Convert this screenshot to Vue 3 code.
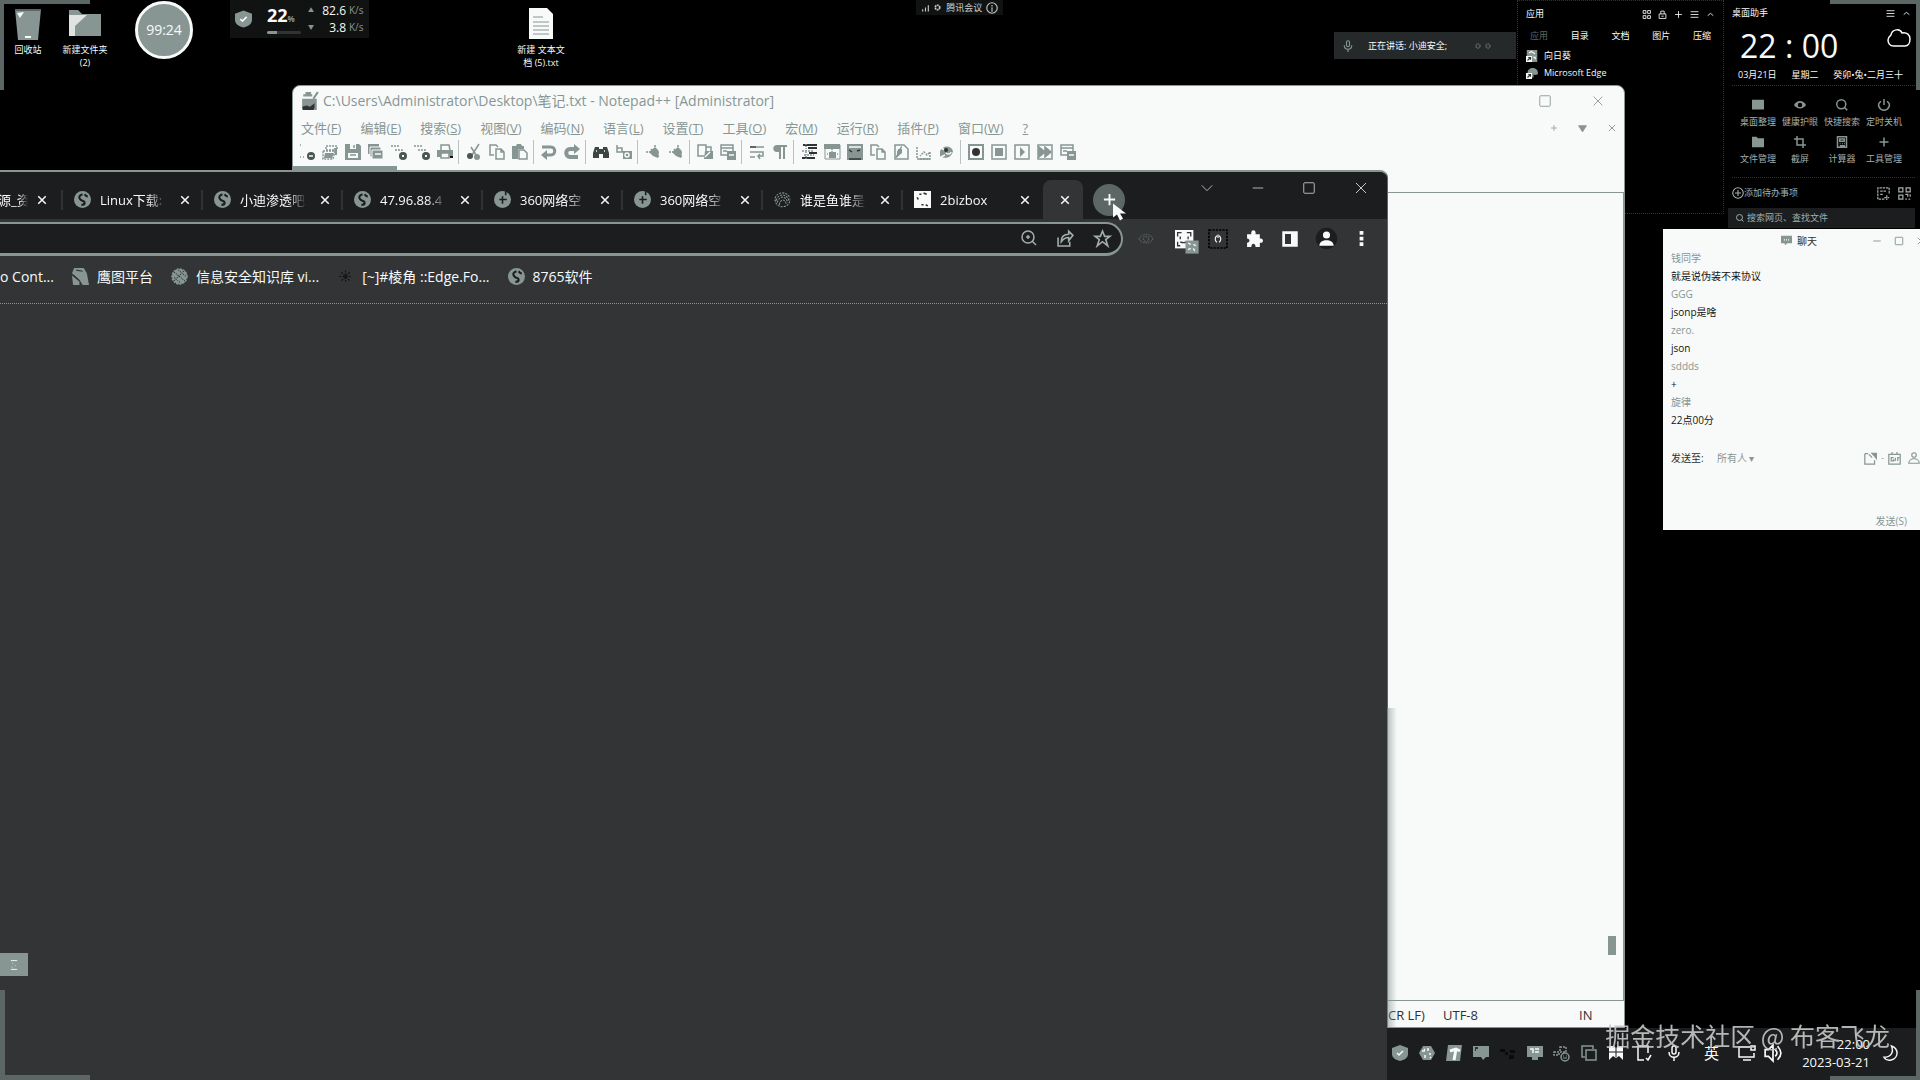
<script setup>
import { h } from 'vue'

const icons = {
  close: '<path d="M3 3l10 10M13 3L3 13"/>',
  minus: '<path d="M2 8h12"/>',
  plus: '<path d="M8 2v12M2 8h12"/>',
  square: '<rect x="2" y="2" width="12" height="12" rx="1"/>',
  down: '<path d="M2 5l6 6 6-6"/>',
  up: '<path d="M3 10l5-4 5 4"/>',
  menu: '<path d="M1 3h14M1 8h14M1 13h14"/>',
  handle: '<path d="M3 1h10M3 15h10M6 5v1M10 8v1M5 11v1"/>',
  tri: '<path d="M1 3h14L8 14z" fill="currentColor"/>',
  globe: '<circle cx="8" cy="8" r="8" fill="currentColor" stroke="none"/><path d="M8 3C5 4 4 6 6 8s4 1 4 3-2 2-3 2M10 3c1 1 1 2 3 2" stroke="#1b1d1e" stroke-width="2"/>',
  compass: '<circle cx="8" cy="8" r="8" fill="currentColor" stroke="none"/><path d="M8 5v7M5 8h7" stroke="#1b1d1e"/><path d="M11 0v4" stroke="#1b1d1e"/>',
  edge: '<path d="M2 8c0-9 14-9 14 0 0 3-4 3-6 2v4H3z" fill="currentColor" stroke="none"/><path d="M0 8h8v8H0z" fill="#f8fafa" stroke="none"/><path d="M2 14l4-4M3 10h3v3" stroke="#303234"/>',
  sunflower: '<path d="M1 0h14v16H1z" fill="currentColor" stroke="none"/><path d="M0 8h8v8H0zM9 9h4v4z" fill="#f8fafa" stroke="none"/><path d="M4 4l3-2 5 3" stroke="#f8fafa"/><path d="M2 14l4-4M3 10h3v3" stroke="#303234"/>',
  print: '<path d="M1 7c2-7 12-7 14 0M2 9c2-7 10-7 12 0M3 11c2-7 8-7 10 0M5 13c1-6 5-6 7 0M1 8c0 9 14 9 14 0" stroke-width="1" stroke-dasharray="2 1"/>',
  bizbox: '<path d="M0 0h16v16H0z" fill="#f8fafa" stroke="none"/><path d="M3 6l1 2M5 3h2M9 2l3 1M7 13h2M11 13l2 1" stroke="#303234"/>',
  zoom: '<circle cx="7" cy="7" r="6"/><path d="M11 11l4 4M7 5v4M5 7h4"/>',
  share: '<path d="M1 7v8h11v-4M4 11c0-5 3-7 7-7V1l4 4-4 5V7c-3 0-5 1-7 4z"/>',
  star: '<path d="M8 1l2 5h5l-4 3 2 6-5-4-5 4 2-6-4-3h5z"/>',
  eye: '<path d="M0 8c4-7 12-7 16 0-4 6-12 6-16 0z" stroke-dasharray="1 1"/><circle cx="8" cy="8" r="3" stroke-dasharray="1 1"/>',
  face: '<path d="M0 0h14v14H0z" fill="#f8fafa" stroke="none"/><path d="M2 5V2h3M9 2h3v3M2 9v3h2M4 5v2M10 5v2M4 9c2 1 3 1 5 0" stroke="#303234" stroke-width="1"/><path d="M8 8h10v10H8z" fill="#879693" stroke="none"/><path d="M10 10l2 1M14 11l2 1M10 15l2-1M14 14l1 2" stroke="#f8fafa" stroke-width="1"/>',
  scope: '<path d="M0 0h16v16H0z" stroke="#000" stroke-dasharray="2 1"/><path d="M7 5c-2 2-2 4 0 6M9 5c2 2 2 4 0 6M8 4v3" stroke-width="1"/>',
  puzzle: '<path d="M1 4h4c-1-5 5-5 4 0h4v4c4-1 4 5 0 4v4H9c0-4-4-4-4 0H1v-4c3 0 3-4 0-4z" fill="currentColor" stroke="none"/>',
  panel: '<rect x="1" y="1" width="14" height="14" fill="currentColor"/><path d="M3 3h6v10H3z" fill="#303234" stroke="none"/>',
  person: '<circle cx="8" cy="8" r="9" fill="#1b1d1e" stroke="none"/><circle cx="8" cy="5" r="3" fill="currentColor" stroke="none"/><path d="M2 14c0-6 12-6 12 0z" fill="currentColor" stroke="none"/>',
  dots: '<path d="M6 0h4v4H6zM6 6h4v4H6zM6 12h4v4H6z" fill="currentColor" stroke="none"/>',
  eagle: '<path d="M2 0h9l3 5 2 11H10L7 11 0 5z" fill="currentColor" stroke="none"/><path d="M0 7l7 6v3H1z" fill="currentColor" stroke="none"/><path d="M4 2l6 1M1 7l4 3" stroke="#303234" stroke-width="1"/>',
  knot: '<circle cx="8" cy="8" r="7" fill="currentColor" stroke-dasharray="2 1"/><path d="M3 4l10 8M3 9l6 5M7 2l7 6M12 3l-9 9" stroke="#303234" stroke-width="1" stroke-dasharray="1 1"/>',
  spark: '<path d="M8 2v12M2 8h12M4 4l8 8M12 4l-8 8" stroke="#121414" stroke-width="1" stroke-dasharray="2 1"/>',
  newdoc: '<path d="M1 1h1M1 13h5" stroke-dasharray="1 2"/><circle cx="12" cy="12" r="4" fill="#4b5553" stroke="none"/><path d="M10 12h4" stroke="#f8fafa"/>',
  open: '<path d="M4 2h11v4H4zM1 7h12l-2 8H1z" stroke-dasharray="2 1"/><path d="M3 9h9l-2 5H2zM12 4h3v7h-2z" fill="currentColor" stroke="none"/>',
  save: '<path d="M0 0h14l2 2v14H0z" fill="currentColor" stroke="none"/><path d="M5 0h6v5H5zM3 9h10v5H3z" fill="#f8fafa" stroke="none"/><path d="M5 11h6M9 1v3"/>',
  saveall: '<path d="M0 0h11v10H0z" fill="currentColor" stroke="none"/><path d="M2 3h11v10H2z" fill="currentColor" stroke="#f8fafa" stroke-width="1"/><path d="M4 6h11v9H4z" fill="currentColor" stroke="#f8fafa" stroke-width="1"/><path d="M7 10h6" stroke="#f8fafa"/>',
  shut: '<path d="M0 2h8M4 6h7v4" stroke-dasharray="2 1"/><circle cx="12" cy="12" r="4" fill="#4b5553" stroke="none"/><path d="M11 11l2 2M13 11l-2 2" stroke="#f8fafa" stroke-width="1"/>',
  printer: '<path d="M4 6V1h8l1 5" /><path d="M0 6h16v7H0z" fill="currentColor" stroke="none"/><path d="M4 9h8v5H4z" fill="#f8fafa"/><path d="M13 13h3" stroke="#121414" stroke-width="2"/>',
  cut: '<path d="M13 0L6 11M5 3l5 8"/><circle cx="4" cy="12" r="3" fill="#4b5553" stroke="none"/><circle cx="11" cy="13" r="3" fill="currentColor" stroke="none"/>',
  copy: '<path d="M5 11H1V1h6l2 2M7 5h5l3 3v7H7zM12 5v3h3"/>',
  paste: '<path d="M0 2h4l1-2h4l1 2h2v3H6v10H0z" fill="currentColor" stroke="none"/><path d="M7 6h5l3 3v6H7z" fill="#f8fafa"/>',
  undo: '<path d="M1 3h9c5 0 5 8 0 8H5" stroke-width="3"/><path d="M0 11l6-5v10z" fill="currentColor" stroke="none"/>',
  redo: '<path d="M12 5H6c-5 0-5 8 0 8h8" stroke-width="4"/><path d="M16 5l-6-5v10z" fill="currentColor" stroke="none"/>',
  find: '<path d="M2 3h4v2h4V3h4l2 6v5h-6v-4H6v4H0V9z" fill="#3c4543" stroke="none"/><path d="M3 7h2M11 7h2" stroke="#f8fafa" stroke-dasharray="1 1"/>',
  swap: '<path d="M1 1v7h5V4H1M6 7l4 4"/><path d="M7 7h9v8H7z" fill="currentColor" stroke="none"/><circle cx="11" cy="11" r="2" stroke="#f8fafa"/>',
  zin: '<path d="M1 8h7M10 1v5M6 5l8 8" stroke-dasharray="2 1"/><path d="M4 8l6-5 3 3 1 2-1 6-5-2z" fill="currentColor" stroke="none"/>',
  pages: '<path d="M1 1h8v11H1zM9 3h5v4"/><path d="M8 7h8v8H7z" fill="currentColor" stroke="none"/><path d="M8 13l5-5" stroke="#f8fafa"/>',
  wrap: '<path d="M1 3h6" stroke="#303234"/><path d="M7 3h8M1 8h13v4h-5M1 13h5M11 10l-2 2 2 3"/>',
  pilcrow: '<path d="M8 1v14M12 1v14M6 2h9" stroke-width="2"/><path d="M8 1H5c-5 0-5 7 0 7h3z" fill="currentColor" stroke="none"/>',
  indent: '<path d="M2 1h14M7 4h9M8 9h8M1 14h13" stroke="#303234" stroke-width="2"/><path d="M1 7h12M3 11h10" stroke-dasharray="2 1"/><path d="M5 0v16" stroke-dasharray="1 1"/>',
  win: '<path d="M1 1h15v14H1z" stroke-width="1"/><path d="M0 0h16v5H0zM5 8h7v6H5z" fill="currentColor" stroke="none"/><path d="M8 5v10M3 10h11" stroke-dasharray="1 1"/>',
  map: '<path d="M0 0h16v16H0z" fill="currentColor" stroke="none"/><path d="M2 3h12" stroke="#f8fafa"/><path d="M2 6l3 2M10 7l3-1M2 15h12" stroke="#303234"/>',
  func: '<path d="M2 1h9l4 4v10H2zM9 3c-3 0-2 9-6 10M4 8h5" /><path d="M5 5h4v4l-6 5z" fill="currentColor" stroke="none"/>',
  folder2: '<path d="M1 3v12h13V8l-3 3-3-3-4 4" stroke-dasharray="2 1"/><path d="M3 15h11" />',
  monitor: '<path d="M1 7c3-6 11-6 13 0-2 8-9 8-13 5z" fill="currentColor" stroke="none"/><path d="M0 3l6 3M2 13l4-2M7 9c2 2 5 1 5-1" stroke="#f8fafa"/><circle cx="7" cy="6" r="2" fill="#303234" stroke="none"/>',
  rec: '<rect x="1" y="1" width="14" height="14" stroke-width="2"/><circle cx="8" cy="8" r="4" fill="#303234" stroke="none"/>',
  stop: '<rect x="1" y="1" width="14" height="14"/><path d="M4 4h8v8H4z" fill="currentColor" stroke="none"/>',
  play: '<rect x="1" y="1" width="14" height="14"/><path d="M6 3l5 5-5 5z" fill="currentColor" stroke="none"/>',
  ffwd: '<rect x="1" y="1" width="14" height="14"/><path d="M2 3l6 5-6 5zM8 3l6 5-6 5z" fill="currentColor"/>',
  savemac: '<path d="M1 1h12v10H1zM1 4h12M3 7h4"/><path d="M7 7h9v9H7z" fill="currentColor" stroke="none"/><path d="M9 11h5" stroke="#f8fafa"/>',
  grid: '<path d="M2 1h5v5H2zM10 1h5v5h-5zM2 10h5v5H2zM10 10h5v5h-5z"/>',
  lock: '<path d="M2 7h12v8H2zM5 7V2h6v5M6 11h4"/>',
  board: '<path d="M0 1h16v13H0z" fill="currentColor" stroke="none"/>',
  eyes: '<path d="M0 8c4-7 12-7 16 0-4 6-12 6-16 0z" fill="currentColor" stroke="none"/><circle cx="8" cy="8" r="3" fill="#000" stroke="none"/>',
  search: '<circle cx="7" cy="7" r="6"/><path d="M11 11l4 4"/>',
  power: '<path d="M8 0v8M4 3c-7 5-1 12 4 12s11-7 4-12"/>',
  folder: '<path d="M0 1h6l2 2h8v12H0z" fill="currentColor" stroke="none"/>',
  crop: '<path d="M4 0v12h12M0 4h12v12"/>',
  calc: '<path d="M2 1h12v14H2zM5 4h6v3H5zM5 10h1M8 10h1M11 10h1M5 13h7"/>',
  cloud: '<path d="M7 18C2 18 1 14 1 12c0-3 2-4 3-5 1-6 9-7 11-2 5-1 8 2 8 6s-2 7-5 7z"/>',
  pluscirc: '<circle cx="8" cy="8" r="7"/><path d="M8 4v8M4 8h8"/>',
  note: '<path d="M15 8V1H1v14h8M4 5h8M4 9h4M12 10v6M9 13h6" stroke-dasharray="3 1"/>',
  qr: '<path d="M1 1h5v5H1zM10 1h5v5h-5zM1 10h5v5H1zM9 9h3v3M15 9v3M9 15h2M13 15h2"/>',
  info: '<circle cx="8" cy="8" r="7"/><path d="M8 4v2M8 7v6"/>',
  signal: '<path d="M3 15v-4M8 15V8M13 15V4" stroke-width="2"/>',
  gear: '<circle cx="8" cy="8" r="4" stroke-width="3" stroke-dasharray="3 1"/>',
  mic: '<rect x="6" y="1" width="4" height="8" rx="2"/><path d="M3 7c0 7 10 7 10 0M8 12v4"/>',
  shield: '<path d="M8 0l8 3v6c0 4-4 6-8 7-4-1-8-3-8-7V3z" fill="currentColor" stroke="none"/><path d="M5 8l2 2 4-4" stroke="#f8fafa"/>',
  bubble: '<path d="M0 1h16v11H9l-3 3-1-3H0z" fill="currentColor" stroke="none"/><path d="M5 6v2M8 6v2M11 6v2" stroke="#f8fafa"/>',
  filecut: '<path d="M1 2h4M1 2v13h12v-5M6 3l4 4" /><path d="M8 1h8v9l-3-4z" fill="currentColor" stroke="none"/>',
  cal: '<path d="M1 3h14v12H1zM5 0v3h6V0M7 7H4v4h3V9M9 7v4M12 11V7h2"/>',
  user: '<circle cx="8" cy="4" r="3"/><path d="M1 15c0-8 14-8 14 0z"/>',
  flower: '<path d="M4 1h8l4 7-4 7H4L0 8z" fill="currentColor" stroke="none"/><path d="M3 6h3M9 3v3M12 9h-2M6 13v-3M5 4l1 1M11 12l1 1" stroke="#f8fafa"/>',
  feather: '<path d="M2 0h14l-2 16H0z" fill="currentColor" stroke="none"/><path d="M8 15l2-11M4 6l6-2 4 2" stroke="#f8fafa" stroke-width="3"/>',
  screen: '<path d="M0 1h16v11h-3l-3 3-2-3H0z" fill="currentColor" stroke="none"/><path d="M2 3h3M2 5h1" stroke="#121414"/>',
  dark: '<path d="M0 4h5v3H0zM5 7h3v3H5zM10 5h5v3h-5zM9 10h5v4H9z" fill="#0a0b0b" stroke="none"/>',
  present: '<path d="M0 1h16v11H0zM5 12h6v3H5z" fill="currentColor" stroke="none"/><path d="M3 4h3v4M8 4h4M8 7h4" stroke="#f8fafa"/>',
  cam: '<path d="M0 7h5v3H0zM6 2h6v5H6z" stroke-dasharray="2 1"/><circle cx="11" cy="12" r="4"/><path d="M9 11h1M12 11h1M9 13h4" stroke-width="1"/>',
  stack: '<path d="M4 12H1V1h11v3M5 5h10v10H5z"/>',
  flag: '<path d="M1 1h5l2 2 2-2h5v14l-4-4-3 2-3-2-4 4z" fill="currentColor" stroke="none"/><path d="M8 0v12M1 7h14" stroke="#1b1d1e" stroke-width="1"/>',
  tablet: '<path d="M13 8V1H3v14h6M11 13l2 2 3-5"/>',
  display: '<path d="M11 2H0v10h15V8M4 15h8M12 1h4v4h-4z"/>',
  sound: '<path d="M1 5h3l4-4v14l-4-4H1zM10 5c2 2 2 4 0 6M12 2c4 4 4 8 0 12"/>',
  moon: '<path d="M9 0c3 7-1 12-8 12 3 5 13 4 14-4 0-4-3-7-6-8z"/>',
  cursor: '<path d="M1 0v14l4-3 3 6 3-2-3-5h6z" fill="#f8fafa" stroke="none"/>',
  np: '<path d="M1 6h13v10H1z" fill="currentColor" stroke="none"/><path d="M1 13l4-1 3 1 4-3v4l-1 2H2z" fill="#303234" stroke="none"/><path d="M2 3h8M4 1h5M11 6l4-6" stroke-width="2"/>',
}

const Ic = (p) => h('svg', {
  viewBox: p.vb || '0 0 16 16',
  width: p.s || 16,
  height: p.t || p.s || 16,
  fill: 'none',
  stroke: 'currentColor',
  'stroke-width': p.w || 1.5,
  'aria-hidden': 'true',
  innerHTML: icons[p.n],
})

const menus = [
  ['文件', 'F'], ['编辑', 'E'], ['搜索', 'S'], ['视图', 'V'], ['编码', 'N'], ['语言', 'L'],
  ['设置', 'T'], ['工具', 'O'], ['宏', 'M'], ['运行', 'R'], ['插件', 'P'], ['窗口', 'W'],
]
const tools = [
  ['newdoc', 'open', 'save', 'saveall', 'shut', 'shut', 'printer'],
  ['cut', 'copy', 'paste'],
  ['undo', 'redo'],
  ['find', 'swap'],
  ['zin', 'zin'],
  ['pages', 'savemac'],
  ['wrap', 'pilcrow'],
  ['indent', 'win', 'map', 'copy', 'func', 'folder2', 'monitor'],
  ['rec', 'stop', 'play', 'ffwd', 'savemac'],
]
const tabs = [
  { icon: 'globe', text: 'Linux下载:' },
  { icon: 'globe', text: '小迪渗透吧' },
  { icon: 'globe', text: '47.96.88.4' },
  { icon: 'compass', text: '360网络空' },
  { icon: 'compass', text: '360网络空' },
  { icon: 'print', text: '谁是鱼谁是' },
  { icon: 'bizbox', text: '2bizbox' },
]
const bookmarks = [
  { icon: 'eagle', text: '鹰图平台' },
  { icon: 'knot', text: '信息安全知识库 vi...' },
  { icon: 'spark', text: '[~]#棱角 ::Edge.Fo...' },
  { icon: 'globe', text: '8765软件' },
]
const quick = [
  ['board', '桌面整理'], ['eyes', '健康护眼'], ['search', '快捷搜索'], ['power', '定时关机'],
  ['folder', '文件管理'], ['crop', '截屏'], ['calc', '计算器'], ['plus', '工具管理'],
]
const messages = [
  ['钱同学', '就是说伪装不来协议'], ['GGG', 'jsonp是啥'], ['zero.', 'json'], ['sddds', '+'], ['旋律', '22点00分'],
]
const tray = ['shield', 'flower', 'feather', 'screen', 'dark', 'present', 'cam', 'stack', 'flag', 'tablet', 'mic']
</script>

<template>
  <main class="desktop">
    <div class="shortcut bin">
      <svg width="28" height="32" viewBox="0 0 28 32"><path d="M1 1h26l-3 31H4z" fill="#879693" /><path d="M1 1h26v2H1z" fill="#5c6664" /><path d="M3 5l7-1-4 6zM11 28h6v2h-6z" fill="#f8fafa" /></svg>
      <span>回收站</span>
    </div>
    <div class="shortcut dir">
      <svg width="32" height="26" viewBox="0 0 32 26"><path d="M0 0h9l4 4h19v22H0z" fill="#879693" /><path d="M0 5h18L6 16v10H0z" fill="#dfe4e3" /></svg>
      <span>新建文件夹<br>(2)</span>
    </div>
    <div class="shortcut doc">
      <svg width="24" height="31" viewBox="0 0 24 31"><path d="M0 0h18l6 6v25H0z" fill="#f8fafa" /><path d="M4 9h10M4 14h16M4 18h16M4 22h16M4 26h16" stroke="#879693" /></svg>
      <span>新建 文本文<br>档 (5).txt</span>
    </div>
    <div class="timer">99:24</div>

    <section class="stats">
      <Ic n="shield" :s="17" :t="20" class="grey" />
      <div class="load"><b>22<small>%</small></b><i></i></div>
      <div class="net">
        <p><span class="arrow">▲</span>82.6<small>K/s</small></p>
        <p><span class="arrow">▼</span>3.8<small>K/s</small></p>
      </div>
    </section>

    <div class="meeting"><Ic n="signal" :s="9" /><Ic n="gear" :s="9" /><span>腾讯会议</span><Ic n="info" :s="12" /></div>
    <div class="speaking"><Ic n="mic" :s="12" class="grey" /><span>正在讲话: 小迪安全;</span><Ic n="gear" :s="8" class="dim" /><Ic n="gear" :s="8" class="dim" /></div>

    <section class="apps">
      <header><span>应用</span><nav><button v-for="n in ['grid', 'lock', 'plus', 'menu', 'up']" :key="n" :aria-label="n"><Ic :n="n" :s="9" /></button></nav></header>
      <nav class="kinds"><button class="faded">应用</button><button>目录</button><button>文档</button><button>图片</button><button>压缩</button></nav>
      <a href="#"><Ic n="sunflower" :s="12" class="grey" />向日葵</a>
      <a href="#"><Ic n="edge" :s="12" class="grey" />Microsoft Edge</a>
    </section>

    <section class="helper">
      <header><span>桌面助手</span><nav><button aria-label="menu"><Ic n="menu" :s="9" /></button><button aria-label="up"><Ic n="up" :s="9" /></button></nav></header>
      <div class="clock"><time>22 : 00</time><Ic n="cloud" vb="0 0 24 20" :s="24" :t="20" /></div>
      <p class="date"><span>03月21日</span><span>星期二</span><span>癸卯•兔•二月三十</span></p>
      <div class="quick"><button v-for="q in quick" :key="q[1]"><Ic :n="q[0]" :s="12" :w="2" /><span>{{ q[1] }}</span></button></div>
      <div class="todo"><button><Ic n="pluscirc" :s="12" />添加待办事项</button><Ic n="note" :s="13" /><Ic n="qr" :s="13" /></div>
      <label class="lookup"><Ic n="search" :s="8" :w="2" /><input aria-label="搜索" placeholder="搜索网页、查找文件"></label>
    </section>

    <section class="notepad">
      <header class="np-title"><Ic n="np" :s="18" :w="1" class="grey" /><h1>C:\Users\Administrator\Desktop\笔记.txt - Notepad++ [Administrator]</h1>
        <button aria-label="最大化"><Ic n="square" :s="14" :w="1" /></button><button aria-label="关闭"><Ic n="close" :s="14" :w="1" /></button></header>
      <nav class="np-menu"><button v-for="m in menus" :key="m[0]">{{ m[0] }}(<u>{{ m[1] }}</u>)</button><button><u>?</u></button>
        <div class="np-right"><Ic n="plus" :s="8" /><Ic n="tri" :s="9" /><Ic n="close" :s="10" /></div></nav>
      <div class="np-tools"><div v-for="(g, i) in tools" :key="i" class="group"><button v-for="(n, j) in g" :key="j" :aria-label="n"><Ic :n="n" :s="16" /></button></div></div>
      <div class="np-tabs"><i></i></div>
      <div class="np-edit"><i class="thumb"></i></div>
      <footer class="np-status"><span>CR LF)</span><span>UTF-8</span><span class="ins">IN</span></footer>
    </section>

    <section class="chrome">
      <div class="strip">
        <div class="tab first"><span>源_资</span><button aria-label="关闭"><Ic n="close" :s="12" :w="2" /></button></div>
        <div v-for="(t, i) in tabs" :key="i" class="tab"><Ic :n="t.icon" :s="17" class="grey" /><span>{{ t.text }}</span><button aria-label="关闭"><Ic n="close" :s="12" :w="2" /></button></div>
        <div class="tab active"><button aria-label="关闭"><Ic n="close" :s="12" :w="2" /></button></div>
        <button class="add" aria-label="新标签"><Ic n="plus" :s="15" :w="2" /><Ic n="cursor" vb="0 0 14 18" :s="14" :t="19" class="cursor" /></button>
        <nav class="winctl"><button aria-label="向下"><Ic n="down" :s="14" :w="1" /></button><button aria-label="最小化"><Ic n="minus" :s="14" :w="1" /></button><button aria-label="最大化"><Ic n="square" :s="14" :w="1" /></button><button aria-label="关闭"><Ic n="close" :s="16" :w="1" /></button></nav>
      </div>
      <div class="bar">
        <div class="omni"><input aria-label="地址"><Ic n="zoom" /><Ic n="share" :s="17" /><Ic n="star" :s="17" /></div>
        <nav class="ext">
          <button aria-label="eye" class="dim"><Ic n="eye" :s="14" /></button><button aria-label="face"><Ic n="face" :s="21" class="face" /></button>
          <button aria-label="scope"><Ic n="scope" :s="18" /></button><button aria-label="扩展"><Ic n="puzzle" :s="17" /></button><button aria-label="侧栏"><Ic n="panel" :s="16" /></button>
          <button aria-label="用户"><Ic n="person" :s="19" /></button><button aria-label="更多"><Ic n="dots" :s="15" /></button>
        </nav>
      </div>
      <nav class="marks"><a href="#">o Cont...</a><a v-for="b in bookmarks" :key="b.text" href="#"><Ic :n="b.icon" :s="17" class="grey" />{{ b.text }}</a></nav>
      <div class="page"><button class="handle" aria-label="展开"><Ic n="handle" :s="10" /></button></div>
    </section>

    <section class="chat">
      <header><Ic n="bubble" :s="11" class="grey" /><span>聊天</span><nav><Ic n="minus" :s="10" /><Ic n="square" :s="10" /><Ic n="close" :s="10" /></nav></header>
      <dl><template v-for="m in messages" :key="m[0]"><dt>{{ m[0] }}</dt><dd>{{ m[1] }}</dd></template></dl>
      <div class="to"><label for="to">发送至:</label><select id="to"><option>所有人</option></select><span class="caret">▾</span>
        <div class="acts"><Ic n="filecut" :s="13" /><small>-</small><Ic n="cal" :s="13" /><Ic n="user" :s="12" /></div></div>
      <textarea aria-label="消息"></textarea>
      <button class="send">发送(S)</button>
    </section>

    <footer class="taskbar">
      <Ic v-for="n in tray" :key="n" :n="n" :s="16" :class="[n, { grey: n !== 'flag' && n !== 'tablet' && n !== 'mic' }]" />
      <span class="ime">英</span><Ic n="display" /><Ic n="sound" :s="18" />
      <time>22:00<br>2023-03-21</time><Ic n="moon" :s="15" />
    </footer>
    <i class="corner tl"></i><i class="corner tr"></i><i class="corner bl"></i><i class="corner br"></i>
    <p class="mark">掘金技术社区 @ 布客飞龙</p>
  </main>
</template>

<style>
body { margin: 0; background: #000; }
</style>

<style scoped>
.desktop { position: relative; width: 100%; height: 100vh; overflow: hidden; background: #000; color: #f8fafa; font: 9px/14px "Open Sans", "Noto Sans CJK SC", sans-serif; }
* { box-sizing: border-box; }
button, input, select, textarea { font: inherit; color: inherit; background: none; border: 0; padding: 0; margin: 0; outline: 0; }
button { display: flex; align-items: center; justify-content: center; white-space: nowrap; }
p, dl, dd, h1 { margin: 0; font-weight: 400; }
a { color: inherit; text-decoration: none; }
svg { flex: none; display: block; overflow: visible; }
.grey { color: #879693; }
.dim { color: #5c6664; }

.shortcut { position: absolute; top: 8px; width: 60px; display: flex; flex-direction: column; align-items: center; justify-content: flex-start; text-align: center; line-height: 13px; }
.shortcut svg { margin-bottom: 3px; }
.bin { left: -2px; }
.dir { left: 55px; top: 10px; }
.dir svg { margin-bottom: 7px; }
.doc { left: 511px; }
.doc svg { margin-bottom: 4px; }
.timer { position: absolute; left: 135px; top: 1px; width: 58px; height: 58px; border: 3px solid #f8fafa; border-radius: 50%; background: #879693; font-size: 14px; line-height: 52px; text-align: center; }
.stats { position: absolute; left: 230px; top: 0; width: 139px; height: 38px; padding: 0 5px; display: flex; align-items: center; background: #111313; }
.load { width: 34px; margin-left: 15px; }
.load b { display: block; font-size: 18px; line-height: 20px; white-space: nowrap; }
.load small { font-size: 8px; color: #879693; }
.load i { display: block; height: 3px; border-radius: 2px; margin-top: 2px; background: linear-gradient(90deg, #879693 30%, #303234 30%); }
.net { margin-left: auto; width: 56px; }
.net p { display: flex; justify-content: flex-end; font-size: 12px; line-height: 17px; }
.net small { width: 18px; padding-left: 3px; font-size: 10px; color: #879693; }
.arrow { margin-right: auto; font-size: 6px; color: #879693; }
.meeting { position: absolute; left: 47.7%; top: 0; height: 15px; width: 87px; padding: 0 5px; display: flex; align-items: center; justify-content: space-between; background: #111313; color: #c4cbc9; }
.speaking { position: absolute; right: 404px; top: 32px; width: 182px; height: 27px; padding-left: 8px; display: flex; align-items: center; background: #26292a; }
.speaking span { width: 120px; padding-left: 14px; }
.speaking .dim { margin-right: 2px; }

.apps { position: absolute; right: 196px; top: 0; width: 207px; height: 214px; padding: 5px 8px; border: 1px dotted #303234; }
.apps header, .helper header { display: flex; justify-content: space-between; align-items: flex-start; height: 16px; line-height: 16px; }
.apps header { height: 19px; }
.apps header nav, .helper header nav { display: flex; gap: 7px; padding-top: 4px; }
.kinds { display: flex; justify-content: space-between; padding: 0 4px; height: 22px; }
.kinds .faded { color: #5c6664; }
.apps a { display: flex; align-items: center; gap: 6px; height: 17px; }

.helper { position: absolute; right: 4px; top: 0; width: 190px; padding: 5px 1px 0 6px; }
.helper header { padding-right: 4px; }
.clock { display: flex; justify-content: space-between; padding: 4px 4px 0 8px; height: 46px; }
.clock time { font-size: 32px; line-height: 42px; white-space: nowrap; }
.clock svg { margin-top: 3px; }
.date { display: flex; justify-content: space-between; padding: 0 12px 0 6px; height: 19px; line-height: 16px; border-bottom: 1px dotted #303234; white-space: nowrap; }
.quick { display: grid; grid-template-columns: repeat(4, 42px); align-content: start; padding: 13px 5px 0; height: 92px; border-bottom: 1px dotted #303234; color: #a3aeac; }
.quick button { flex-direction: column; justify-content: flex-start; gap: 4px; height: 37px; }
.quick svg { color: #879693; }
.todo { display: flex; align-items: center; gap: 8px; height: 30px; padding-right: 4px; color: #a3aeac; }
.todo button { margin-right: auto; }
.lookup { display: flex; align-items: center; gap: 3px; height: 20px; margin-left: -4px; padding-left: 8px; background: #1b1d1e; color: #a3aeac; }
.lookup input { flex: 1; min-width: 0; }
.lookup input::placeholder { color: #a3aeac; opacity: 1; }

.notepad { position: absolute; left: 292px; right: 295px; top: 85px; bottom: 52px; display: flex; flex-direction: column; background: #f8fafa; color: #879693; border: 1px solid #879693; border-radius: 8px 8px 0 0; }
.np-title { display: flex; align-items: center; height: 30px; padding: 0 19px 0 8px; }
.np-title h1 { flex: 1; padding-left: 4px; font-size: 14px; line-height: 20px; white-space: nowrap; }
.np-title button { width: 14px; margin-left: 39px; }
.np-menu { display: flex; align-items: center; gap: 19px; height: 24px; padding: 0 7px 0 8px; font-size: 13px; }
.np-right { display: flex; align-items: center; gap: 20px; margin-left: auto; }
.np-tools { display: flex; height: 24px; padding-left: 2px; }
.group { display: flex; align-items: center; }
.group + .group { margin-left: 2px; padding-left: 3px; border-left: 1px solid #b9c2c0; }
.group button { width: 23px; }
.np-tabs { height: 29px; flex: none; border-bottom: 1px solid #879693; }
.np-tabs i { display: block; width: 104px; height: 7px; border-top: 2px solid #f8fafa; background: #879693; }
.np-edit { flex: 1; padding-right: 7px; border-right: 1px solid #879693; }
.thumb { display: block; width: 8px; height: 19px; margin: 743px 0 0 auto; background: #879693; }
.np-status { display: flex; height: 27px; flex: none; padding-left: 1095px; border-top: 1px solid #879693; font-size: 13px; line-height: 28px; color: #303234; white-space: nowrap; }
.np-status span { width: 55px; }
.np-status .ins { margin-left: auto; width: 45px; }

.chrome { position: absolute; left: 0; right: 532px; top: 170px; bottom: 0; display: flex; flex-direction: column; background: #323436; border-top: 2px solid #879693; border-right: 1px solid #5c6664; border-radius: 0 8px 0 0; }
.chrome::after { content: ""; position: absolute; left: 100%; bottom: 52px; width: 10px; height: 320px; background: linear-gradient(90deg, rgba(135, 150, 147, .6), transparent); }
.strip { display: flex; align-items: center; height: 47px; padding-top: 8px; background: #1b1d1e; border-radius: 0 7px 0 0; font-size: 13px; line-height: 20px; }
.tab { flex: none; display: flex; align-items: center; width: 140px; height: 20px; padding: 0 10px 0 11px; border-right: 2px solid #303234; }
.tab span { flex: 1; min-width: 0; overflow: hidden; white-space: nowrap; margin: 0 12px 0 9px; -webkit-mask-image: linear-gradient(90deg, #000 70%, transparent); mask-image: linear-gradient(90deg, #000 70%, transparent); }
.first { width: 63px; padding: 0 13px 0 0; }
.first span { margin: 0 8px 0 -2px; }
.tab:nth-child(8) { border: 0; padding-right: 12px; }
.active { width: 40px; height: 39px; padding: 0 0 0 3px; justify-content: center; background: #323436; border: 0; border-radius: 8px 8px 0 0; }
.add { position: relative; width: 32px; height: 32px; margin-left: 10px; border-radius: 50%; background: #5c6664; }
.cursor { position: absolute; left: 19px; top: 19px; }
.winctl { display: flex; gap: 37px; margin: -24px 18px 0 auto; color: #c4cbc9; }
.bar { display: flex; align-items: center; height: 39px; padding-right: 9px; }
.omni { flex: 1; display: flex; align-items: center; gap: 20px; height: 34px; padding-right: 10px; border: 2px solid #879693; border-bottom-width: 3px; border-left: 0; border-radius: 0 17px 17px 0; background: #1b1d1e; color: #a3aeac; }
.omni input { flex: 1; }
.ext { display: flex; margin-left: 5px; }
.ext button { width: 36px; height: 24px; }
.ext button:last-child { width: 34px; }
.face { margin-top: 4px; margin-left: 6px; }
.marks { display: flex; align-items: center; height: 46px; padding-bottom: 8px; font-size: 14px; line-height: 20px; white-space: nowrap; border-bottom: 1px dotted #879693; }
.marks a { display: flex; align-items: center; gap: 8px; margin-right: 18px; }
.page { flex: 1; display: flex; align-items: flex-end; padding-bottom: 104px; }
.handle { width: 28px; height: 23px; background: #879693; }

.chat { position: absolute; right: 0; top: 229px; width: 257px; height: 301px; padding: 0 8px; display: flex; flex-direction: column; background: #f8fafa; color: #879693; font-size: 10px; }
.chat header { display: flex; align-items: center; height: 20px; padding: 3px 0 0 110px; color: #303234; }
.chat header span { padding-left: 5px; }
.chat header nav { display: flex; gap: 12px; margin: 0 -14px 0 auto; color: #879693; }
.chat dl { line-height: 18px; height: 199px; }
.chat dt { height: 18px; }
.chat dd { height: 18px; color: #121414; }
.to { display: flex; align-items: center; height: 20px; }
.to label { color: #303234; width: 46px; }
.to select { appearance: none; width: 32px; }
.acts { display: flex; align-items: center; gap: 4px; margin: 0 -8px 0 auto; }
.acts svg:last-child { margin-left: 3px; }
.chat textarea { flex: 1; min-height: 0; resize: none; }
.send { align-self: flex-end; height: 18px; margin-right: 5px; }

.taskbar { position: absolute; left: 1387px; right: 0; bottom: 0; height: 52px; padding: 0 22px 2px 5px; display: flex; align-items: center; gap: 11px; background: #1b1d1e; }
.taskbar .mic { margin-left: 4px; }
.taskbar .ime { width: 24px; margin-left: 11px; font-size: 15px; }
.taskbar .ime + svg { margin-right: -2px; }
.taskbar time { margin: 0 2px 0 auto; text-align: right; font-size: 13px; line-height: 18px; }
.corner { position: absolute; width: 90px; height: 90px; border: 0 solid #5c6664; pointer-events: none; }
.tl { left: 0; top: 0; border-width: 4px 0 0 4px; }
.tr { right: 0; top: 0; border-width: 4px 4px 0 0; }
.bl { left: 0; bottom: 0; border-width: 0 0 5px 5px; }
.br { right: 0; bottom: 0; border-width: 0 4px 4px 0; }
.mark { position: absolute; right: 30px; bottom: 27px; font: 25px/36px "Noto Sans CJK SC", sans-serif; color: #c8c8c8; opacity: .9; white-space: nowrap; }
</style>
